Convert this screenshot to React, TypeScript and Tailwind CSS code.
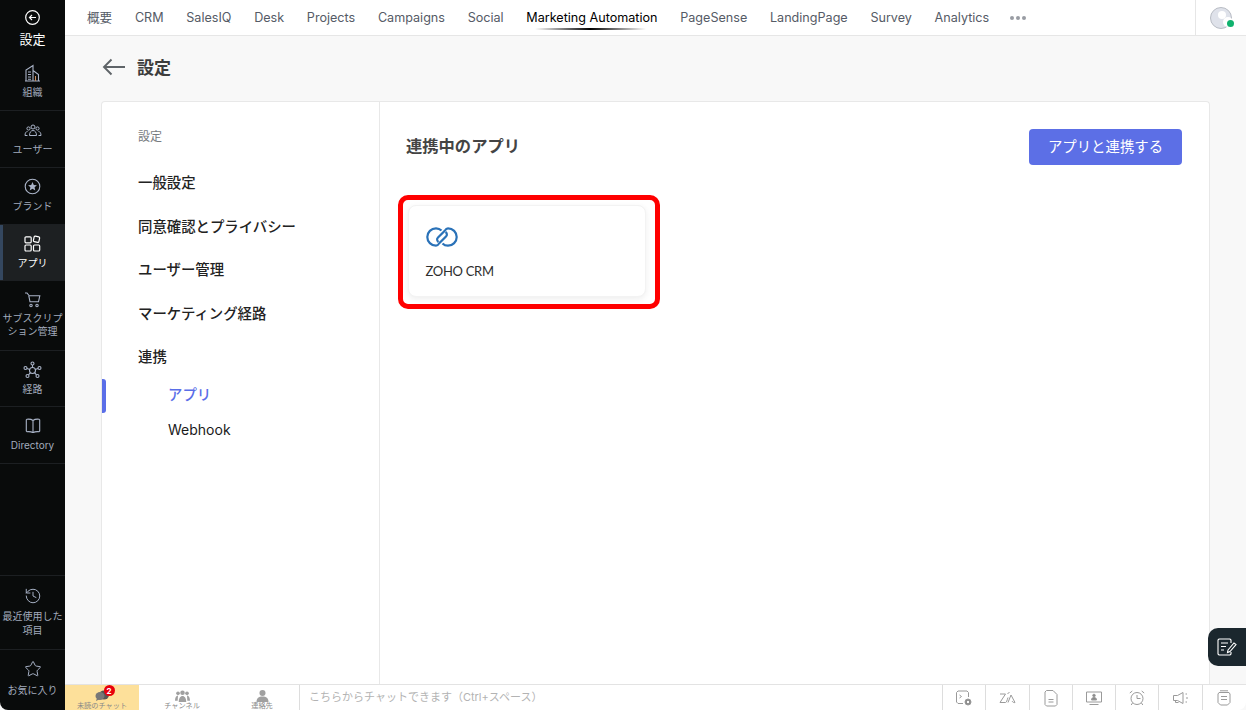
import React from "react";
import { History, Star } from "lucide-react";

const cjk = "font-['Inter','Noto_Sans_CJK_JP',sans-serif]";

const Building = () => (
  <svg width="17" height="18" viewBox="0 0 17 18" fill="none" stroke="#aab4c8" strokeWidth="1.1">
    <path d="M2 17V6l7-4.500V17M9 6.500l5.500 4V17M1 17h15" />
    <path d="M4 8h3M4 10.500h3M4 13h3M4 15.300h3" />
    <path d="M11.500 12v5" stroke="#c98f5f" />
  </svg>
);
const Users = () => (
  <svg width="18" height="14" viewBox="0 0 18 14" fill="none" stroke="#aab4c8" strokeWidth="1">
    <circle cx="9" cy="4" r="2" />
    <circle cx="4.500" cy="5.500" r="1.600" />
    <circle cx="13.500" cy="5.500" r="1.600" />
    <path d="M5.500 12.500c0-3.200 1.500-5 3.500-5s3.500 1.800 3.500 5zM3.500 12.500H1c0-2.500 1-4 2.500-4M14.500 12.500H17c0-2.500-1-4-2.500-4" />
  </svg>
);
const Brand = () => (
  <svg width="17" height="17" viewBox="0 0 17 17" fill="none">
    <circle cx="8.500" cy="8.500" r="7.300" stroke="#aab4c8" strokeWidth="1.100" />
    <path d="M8.500 4l1.300 2.900 3.100.3-2.300 2.100.7 3.100-2.800-1.600-2.800 1.600.7-3.100L4.100 7.200l3.100-.3z" fill="#aab4c8" />
  </svg>
);
const Apps = () => (
  <svg width="17" height="17" viewBox="0 0 17 17" fill="none" stroke="#ffffff" strokeWidth="1.200">
    <rect x="1" y="1.800" width="6.200" height="6" rx="1" />
    <rect x="1" y="10" width="6.200" height="6" rx="1" />
    <rect x="9.500" y="10" width="6.200" height="6" rx="1" />
    <rect x="9.700" y="1.500" width="5.600" height="5.600" rx="1" transform="rotate(12 12.500 4.300)" />
  </svg>
);
const Cart = () => (
  <svg width="17" height="16" viewBox="0 0 17 16" fill="none" stroke="#aab4c8" strokeWidth="1.100">
    <path d="M1 1h2l2.200 2.800h10.600l-1.300 6H6L4.800 3.800" />
    <circle cx="7" cy="13.500" r="1.200" />
    <circle cx="13" cy="13.500" r="1.200" />
  </svg>
);
const Journey = () => (
  <svg width="19" height="18" viewBox="0 0 19 18" fill="none" stroke="#aab4c8" strokeWidth="1.100">
    <circle cx="9.500" cy="2.500" r="1.500" />
    <circle cx="2.500" cy="7" r="1.500" />
    <circle cx="16.500" cy="7" r="1.500" />
    <circle cx="4.500" cy="15" r="1.500" />
    <circle cx="14.500" cy="15" r="1.500" />
    <path d="M9.500 4v2.500M4 7.500l2.800 1M15 7.500l-2.800 1M5.500 13.800l1.800-2M13.500 13.800l-1.800-2" />
    <circle cx="9.500" cy="9.500" r="3" />
  </svg>
);
const Book = () => (
  <svg width="16" height="15" viewBox="0 0 16 15" fill="none" stroke="#aab4c8" strokeWidth="1.100">
    <path d="M8 2.500C6.500 1.300 4 1 2 1.200L1.300 2v11l.7.700c2-.2 4.500 0 6 1 1.500-1 4-1.200 6-1l.7-.7V2L14 1.200C12 1 9.500 1.300 8 2.500zM8 2.500v11.500" />
  </svg>
);

function NavItem({
  icon,
  label,
  active,
  heightClass,
  labelClass = "leading-[14px]",
  topClass = "pt-[9px]",
}: {
  icon: React.ReactNode;
  label: React.ReactNode;
  active?: boolean;
  heightClass: string;
  labelClass?: string;
  topClass?: string;
}) {
  return (
    <div
      className={`relative flex flex-col items-center border-b border-[#1c1f22] ${topClass} ${heightClass} ${
        active ? "bg-[#1d2022]" : ""
      }`}
    >
      {active && <div className="absolute left-0 top-0 bottom-0 w-[3px] bg-[#34475f]" />}
      <div className="flex h-[19px] items-center justify-center">{icon}</div>
      <div className={`mt-[3px] text-center text-[10px] ${active ? "text-white" : "text-[#a3abbd]"} ${labelClass}`}>
        {label}
      </div>
    </div>
  );
}

function Sidebar() {
  return (
    <aside className={`flex h-[710px] w-[65px] shrink-0 flex-col rounded-bl-[8px] bg-[#090b0b] ${cjk}`}>
      <div className="flex h-[54px] flex-col items-center pt-[10px]">
        <svg width="15" height="15" viewBox="0 0 15 15" fill="none" stroke="#ffffff" strokeWidth="1.200">
          <circle cx="7.500" cy="7.500" r="6.800" />
          <path d="M11 7.500H4.500M7 5L4.500 7.500 7 10" />
        </svg>
        <div className="mt-[5px] text-[13px] leading-[18px] text-white">設定</div>
      </div>
      <NavItem icon={<Building />} label="組織" heightClass="h-[57px]" />
      <NavItem icon={<Users />} label="ユーザー" heightClass="h-[57px]" />
      <NavItem icon={<Brand />} label="ブランド" heightClass="h-[57px]" />
      <NavItem icon={<Apps />} label="アプリ" active heightClass="h-[56px]" />
      <NavItem
        icon={<Cart />}
        label={
          <>
            サブスクリプ
            <br />
            ション管理
          </>
        }
        heightClass="h-[70px]"
        labelClass="leading-[13px]"
      />
      <NavItem icon={<Journey />} label="経路" heightClass="h-[56px]" />
      <NavItem icon={<Book />} label="Directory" heightClass="h-[57px]" />
      <div className="flex-1 border-b border-[#1c1f22]" />
      <NavItem
        icon={<History size={18} strokeWidth={1.3} color="#aab4c8" />}
        label={
          <>
            最近使用した
            <br />
            項目
          </>
        }
        heightClass="h-[74px]"
        topClass="pt-[10px]"
        labelClass="pt-[1px] leading-[14px]"
      />
      <div className="flex h-[60px] flex-col items-center pt-[10px]">
        <Star size={18} strokeWidth={1.3} color="#aab4c8" />
        <div className="mt-[5px] text-[10px] leading-[14px] text-[#a3abbd]">お気に入り</div>
      </div>
    </aside>
  );
}

const tabs = ["概要", "CRM", "SalesIQ", "Desk", "Projects", "Campaigns", "Social", "Marketing Automation", "PageSense", "LandingPage", "Survey", "Analytics"];

function TopBar() {
  return (
    <header className={`flex h-[36px] shrink-0 items-center border-b border-[#e6e6e6] bg-white pl-[22px] ${cjk}`}>
      <nav className="flex flex-1 items-center gap-[22.700px] pt-[2px] text-[12.600px] text-[#555b66]">
        {tabs.map((t) => (
          <div key={t} className={`relative whitespace-nowrap ${t === "Marketing Automation" ? "text-black" : ""}`}>
            {t}
            {t === "Marketing Automation" && (
              <div className="absolute -bottom-[2px] left-[9px] right-[12px] h-[2px] bg-gradient-to-r from-transparent via-black to-transparent" />
            )}
          </div>
        ))}
        <div className="-ml-[2px] flex gap-[2px]">
          <span className="h-[4px] w-[4px] rounded-full bg-[#999ca3]" />
          <span className="h-[4px] w-[4px] rounded-full bg-[#999ca3]" />
          <span className="h-[4px] w-[4px] rounded-full bg-[#999ca3]" />
        </div>
      </nav>
      <div className="flex h-full w-[51px] items-center justify-center border-l border-[#e6e6e6]">
        <div className="relative h-[22px] w-[22px] rounded-full border border-[#b8bcc4] bg-[#dfe2ea]">
          <div className="absolute left-[7px] top-[3px] h-[8px] w-[8px] rounded-full bg-white" />
          <div className="absolute -right-[2px] bottom-[1px] h-[10px] w-[10px] rounded-full bg-white" />
          <div className="absolute -right-[3px] bottom-[1px] h-[7px] w-[7px] rounded-full bg-[#10b26e]" />
        </div>
      </div>
    </header>
  );
}

const menu = ["一般設定", "同意確認とプライバシー", "ユーザー管理", "マーケティング経路", "連携"];

function Settings() {
  return (
    <div className={`flex w-[278px] shrink-0 flex-col border-r border-[#e8e8e8] pl-[36px] pt-[27px] ${cjk}`}>
      <div className="text-[12px] leading-[16px] text-[#777b80]">設定</div>
      <div className="mt-[27px] flex flex-col gap-[21.500px]">
        {menu.map((m) => (
          <div key={m} className="text-[14.400px] font-medium leading-[22px] text-[#222222]">
            {m}
          </div>
        ))}
      </div>
      <div className="relative mt-[17px] pl-[30px] text-[14px] leading-[20px]">
        <div className="absolute -left-[36px] -top-[6px] h-[34px] w-[4px] rounded-r-[3px] bg-[#5a6ee8]" />
        <div className="text-[14.400px] font-medium text-[#5a6ee8]">アプリ</div>
        <div className="mt-[15px] text-[#1a1a1a]">Webhook</div>
      </div>
    </div>
  );
}

function ConnectedApps() {
  const link = "M15.500 3.500C14 2 12 1.300 10 1.300 5.200 1.300 1.300 5.200 1.300 10s3.900 8.700 8.700 8.700c1.500 0 2.500-1.200 3.500-2.700l6.500-6.500c1.500-1.500 1-3.500-.5-4.500";
  return (
    <div className={`flex-1 px-[27px] pt-[27px] ${cjk}`}>
      <div className="flex items-center justify-between">
        <div className="-ml-[1px] pb-[2px] text-[16.300px] font-semibold text-[#444444]">連携中のアプリ</div>
        <button className="h-[36px] w-[153px] rounded-[4px] bg-[#5c6fe6] text-[14.400px] text-white">アプリと連携する</button>
      </div>
      <div className="-ml-[9px] mt-[30px] h-[114px] w-[262px] rounded-[10px] border-[5px] border-[#ff0000] pl-[5px] pt-[5px]">
        <div className="h-[92px] w-[238px] rounded-[8px] border border-[#f3f3f3] bg-white pl-[17px] pt-[21px] shadow-[0_2px_6px_rgba(0,0,0,0.07)]">
          <svg width="32" height="20" viewBox="0 0 32 20" fill="none" stroke="#2a72b8" strokeWidth="2.200" className="block">
            <path d={link} />
            <path d={link} transform="rotate(180 16 10)" />
          </svg>
          <div className="-ml-[0.5px] mt-[14px] font-['Lato',sans-serif] text-[13px] leading-[20px] tracking-[-0.3px] text-[#2e2e2e]">ZOHO CRM</div>
        </div>
      </div>
    </div>
  );
}

function BottomBar() {
  const ic = { width: 18, height: 18, fill: "none", stroke: "#9a9a9a", strokeWidth: 1 } as const;
  const icons = [
    <svg {...ic} viewBox="0 0 18 18"><path d="M8 14.500H3l-1.500-1.500V3.500L3 2h9l1.500 1.500V8M4.500 6l2 1.500-2 1.500" /><circle cx="13" cy="13" r="3" fill="#8a8a8a" /><circle cx="13" cy="13" r="1.200" fill="#ffffff" stroke="none" /></svg>,
    <svg {...ic} viewBox="0 0 18 18"><path d="M2 5h5.500L2 13.500h5.500c1 0 1.500-2 2.500-5M10 13.500L13 6l4 7.500c-1 .5-2.500-.5-3-1.500M9.500 5l2-2" /></svg>,
    <svg {...ic} viewBox="0 0 18 18"><path d="M3 3l1.500-1.500h6.500l4 4v10L13.500 17h-9L3 15.500zM6.500 10.500h5M6.500 13h5" /></svg>,
    <svg {...ic} viewBox="0 0 18 18"><path d="M1.500 3h15v10h-15zM4.500 15.500h9" /><circle cx="9" cy="6.500" r="1.300" fill="#8a8a8a" /><path d="M6.500 11c0-1.800 1-2.500 2.500-2.500s2.500.7 2.500 2.500z" fill="#8a8a8a" /></svg>,
    <svg {...ic} viewBox="0 0 18 18"><circle cx="9" cy="9.500" r="6" /><path d="M9 6v3.500h3.500M1.800 4l2.500-2M16.200 4l-2.500-2M4.500 14l-1.300 2M13.500 14l1.300 2" /></svg>,
    <svg {...ic} viewBox="0 0 18 18"><path d="M1.500 6.500h4l5.500-3v11l-5.500-3h-4zM3.500 11.500v2h3M13.500 5h1.500M14 9h2M13.500 13h1.500" /></svg>,
    <svg {...ic} viewBox="0 0 18 18"><path d="M3 5l1-1.500h10l1 1.500v8.500L12.500 16h-7L3 13.500zM5 1.800h8M6 7.500h6M6 10.500h6" /></svg>,
  ];
  const tab = (icon: React.ReactNode, label: string, extra: string) => (
    <div className={`relative flex flex-col items-center pt-[5px] ${extra}`}>
      <div className="flex h-[11px] items-center justify-center">{icon}</div>
      <div className="text-[7.200px] leading-[10px] text-[#888888]">{label}</div>
    </div>
  );
  return (
    <footer className={`flex h-[26px] shrink-0 items-stretch rounded-br-[8px] border-t border-[#e3e3e3] bg-white ${cjk}`}>
      {tab(
        <div className="relative h-[11px] w-[15px]">
          <svg width="15" height="11" viewBox="0 0 15 11" fill="#555555"><ellipse cx="9" cy="5" rx="5" ry="4.500" /><ellipse cx="5" cy="6" rx="4.500" ry="4" fill="#777777" /><path d="M2 8l-1 3 4-2z" fill="#777777" /></svg>
          <div className="absolute -right-[5px] -top-[5px] flex h-[11px] w-[11px] items-center justify-center rounded-full bg-[#e8000b] text-[8px] font-bold leading-none text-white">2</div>
        </div>,
        "未読のチャット",
        "w-[74px] bg-[#fde09a]"
      )}
      {tab(
        <svg width="15" height="12" viewBox="0 0 14 11" fill="#a0a0a0"><circle cx="7" cy="2.500" r="2.100" /><circle cx="2.800" cy="3" r="1.700" /><circle cx="11.200" cy="3" r="1.700" /><path d="M3.500 11c0-3.500 1.500-5.500 3.500-5.500s3.500 2 3.500 5.500zM2.500 10H0c0-3 1-5 2.800-5zM11.500 10H14c0-3-1-5-2.800-5z" /></svg>,
        "チャンネル",
        "w-[86px]"
      )}
      {tab(
        <svg width="13" height="12" viewBox="0 0 12 11" fill="#a0a0a0"><circle cx="6" cy="2.800" r="2.800" /><path d="M.5 11c0-3.500 2-5 5.500-5s5.500 1.500 5.500 5z" /></svg>,
        "連絡先",
        "w-[75px] border-r border-[#dddddd]"
      )}
      <div className="flex flex-1 items-center pl-[9px] text-[11px] text-[#b3b3b3]">こちらからチャットできます（Ctrl+スペース）</div>
      {icons.map((ico, i) => (
        <div key={i} className="flex w-[43.300px] items-center justify-center border-l border-[#dddddd]">
          {ico}
        </div>
      ))}
      <div className="w-[1px]" />
    </footer>
  );
}

export default function App() {
  return (
    <div className="relative flex h-[710px] w-[1246px] overflow-hidden bg-[#f8f8f8]">
      <Sidebar />
      <div className="flex min-w-0 flex-1 flex-col">
        <TopBar />
        <main className="flex min-h-0 flex-1 flex-col pl-[36px] pr-[36px]">
          <div className={`flex h-[65px] shrink-0 items-center gap-[11px] pb-[3px] ${cjk}`}>
            <svg width="24" height="18" viewBox="0 0 24 18" fill="none" stroke="#5f6468" strokeWidth="1.900" className="ml-[1px]">
              <path d="M23 9H2M9.500 1.500L2 9l7.500 7.500" />
            </svg>
            <div className="mt-[4px] text-[17px] font-bold text-[#3d3d3d]">設定</div>
          </div>
          <div className="flex min-h-0 flex-1 rounded-t-[4px] border border-b-0 border-[#e8e8e8] bg-white">
            <Settings />
            <ConnectedApps />
          </div>
        </main>
        <BottomBar />
      </div>
      <div className="absolute right-0 top-[628px] flex h-[38px] w-[38px] items-center justify-center rounded-l-[10px] bg-[#1b272e]">
        <svg width="20" height="18" viewBox="0 0 20 18" fill="none" stroke="#ffffff" strokeWidth="1.100">
          <path d="M14 5V2l-1-1H2L1 2v14l1 1h11l1-1v-2M4 5h7M4 8.500h5M4 12h3M11 12l6-7 2 1.500-6 7-2.500 1z" />
        </svg>
      </div>
    </div>
  );
}
